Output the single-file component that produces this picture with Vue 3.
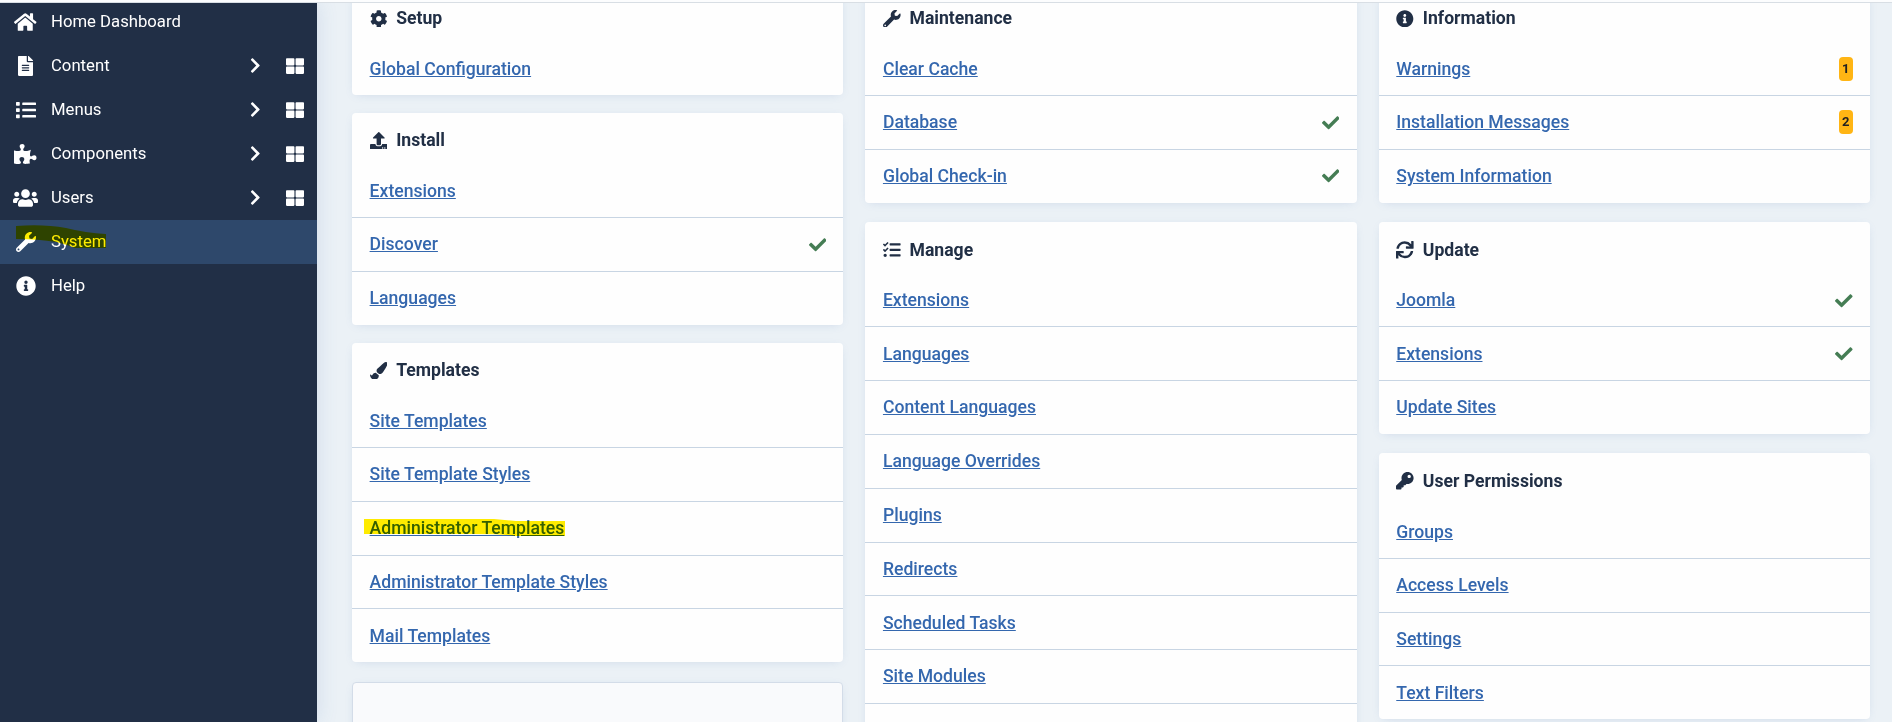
<script setup>
const icons = {
  home: [576, 'M280.37 148.26L96 300.11V464a16 16 0 0 0 16 16l112.06-.29a16 16 0 0 0 15.92-16V368a16 16 0 0 1 16-16h64a16 16 0 0 1 16 16v95.64a16 16 0 0 0 16 16.05L464 480a16 16 0 0 0 16-16V300L295.67 148.26a12.19 12.19 0 0 0-15.3 0zM571.6 251.47L488 182.56V44.05a12 12 0 0 0-12-12h-56a12 12 0 0 0-12 12v72.61L318.47 43a48 48 0 0 0-61 0L4.34 251.47a12 12 0 0 0-1.6 16.9l25.5 31A12 12 0 0 0 45.15 301l235.22-193.74a12.19 12.19 0 0 1 15.3 0L530.9 301a12 12 0 0 0 16.9-1.6l25.5-31a12 12 0 0 0-1.7-16.93z'],
  file: [384, 'M224 136V0H24C10.7 0 0 10.7 0 24v464c0 13.3 10.7 24 24 24h336c13.3 0 24-10.7 24-24V160H248c-13.2 0-24-10.8-24-24zm64 236c0 6.6-5.4 12-12 12H108c-6.6 0-12-5.4-12-12v-8c0-6.6 5.4-12 12-12h168c6.6 0 12 5.4 12 12v8zm0-64c0 6.6-5.4 12-12 12H108c-6.6 0-12-5.4-12-12v-8c0-6.6 5.4-12 12-12h168c6.6 0 12 5.4 12 12v8zm0-72v8c0 6.6-5.4 12-12 12H108c-6.6 0-12-5.4-12-12v-8c0-6.6 5.4-12 12-12h168c6.6 0 12 5.4 12 12zm96-114.1v6.1H256V0h6.1c6.4 0 12.5 2.5 17 7l97.9 98c4.5 4.5 7 10.6 7 16.9z'],
  list: [512, 'M80 368H16a16 16 0 0 0-16 16v64a16 16 0 0 0 16 16h64a16 16 0 0 0 16-16v-64a16 16 0 0 0-16-16zm0-320H16A16 16 0 0 0 0 64v64a16 16 0 0 0 16 16h64a16 16 0 0 0 16-16V64a16 16 0 0 0-16-16zm0 160H16a16 16 0 0 0-16 16v64a16 16 0 0 0 16 16h64a16 16 0 0 0 16-16v-64a16 16 0 0 0-16-16zm416 176H176a16 16 0 0 0-16 16v32a16 16 0 0 0 16 16h320a16 16 0 0 0 16-16v-32a16 16 0 0 0-16-16zm0-320H176a16 16 0 0 0-16 16v32a16 16 0 0 0 16 16h320a16 16 0 0 0 16-16V80a16 16 0 0 0-16-16zm0 160H176a16 16 0 0 0-16 16v32a16 16 0 0 0 16 16h320a16 16 0 0 0 16-16v-32a16 16 0 0 0-16-16z'],
  puzzle: [576, 'M519.442 288.651c-41.519 0-59.5 31.593-82.058 31.593C377.409 320.244 432 144 432 144s-196.288 80-196.288-3.297c0-35.827 36.288-46.25 36.288-85.985C272 19.216 243.885 0 210.539 0c-34.654 0-66.366 18.891-66.366 56.346 0 41.364 31.711 59.277 31.711 81.75C175.885 207.719 0 166.758 0 166.758v333.237s178.635 41.047 178.635-28.662c0-22.473-40-40.107-40-81.471 0-37.456 29.25-56.346 63.577-56.346 33.673 0 61.788 19.216 61.788 54.717 0 39.735-36.288 50.158-36.288 85.985 0 60.803 129.675 25.73 181.23 25.73 0 0-34.725-120.101 25.827-120.101 35.962 0 46.423 36.152 86.308 36.152C556.712 416 576 387.99 576 354.443c0-34.199-18.962-65.792-56.558-65.792z'],
  users: [640, 'M96 224c35.3 0 64-28.7 64-64s-28.7-64-64-64-64 28.7-64 64 28.7 64 64 64zm448 0c35.3 0 64-28.7 64-64s-28.7-64-64-64-64 28.7-64 64 28.7 64 64 64zm32 32h-64c-17.6 0-33.5 7.1-45.1 18.6 40.3 22.1 68.9 62 75.1 109.4h66c17.7 0 32-14.3 32-32v-32c0-35.3-28.7-64-64-64zm-256 0c61.9 0 112-50.1 112-112S381.9 32 320 32 208 82.1 208 144s50.1 112 112 112zm76.8 32h-8.3c-20.8 10-43.9 16-68.5 16s-47.6-6-68.5-16h-8.3C179.6 288 128 339.6 128 403.2V432c0 26.5 21.5 48 48 48h288c26.5 0 48-21.5 48-48v-28.8c0-63.6-51.6-115.2-115.2-115.2zm-223.7-13.4C161.5 263.1 145.6 256 128 256H64c-35.3 0-64 28.7-64 64v32c0 17.7 14.3 32 32 32h65.9c6.3-47.4 34.9-87.3 75.2-109.4z'],
  wrench: [512, 'M507.73 109.1c-2.24-9.03-13.54-12.09-20.12-5.51l-74.36 74.36-67.88-11.31-11.31-67.88 74.36-74.36c6.62-6.62 3.43-17.9-5.66-20.16-47.38-11.74-99.55.91-136.58 37.93-39.64 39.64-50.55 97.1-34.05 147.2L18.74 402.76c-24.99 24.99-24.99 65.51 0 90.5 24.99 24.99 65.51 24.99 90.5 0l213.21-213.21c50.12 16.71 107.47 5.68 147.37-34.22 37.07-37.07 49.7-89.32 37.91-136.73zM64 472c-13.25 0-24-10.75-24-24 0-13.26 10.75-24 24-24s24 10.74 24 24c0 13.25-10.75 24-24 24z'],
  info: [512, 'M256 8C119.043 8 8 119.083 8 256c0 136.997 111.043 248 248 248s248-111.003 248-248C504 119.083 392.957 8 256 8zm0 110c23.196 0 42 18.804 42 42s-18.804 42-42 42-42-18.804-42-42 18.804-42 42-42zm56 254c0 6.627-5.373 12-12 12h-88c-6.627 0-12-5.373-12-12v-24c0-6.627 5.373-12 12-12h12v-64h-12c-6.627 0-12-5.373-12-12v-24c0-6.627 5.373-12 12-12h64c6.627 0 12 5.373 12 12v100h12c6.627 0 12 5.373 12 12v24z'],
  chevron: [320, 'M285.476 272.971L91.132 467.314c-9.373 9.373-24.569 9.373-33.941 0l-22.667-22.667c-9.357-9.357-9.375-24.522-.04-33.901L188.505 256 34.484 101.255c-9.335-9.379-9.317-24.544.04-33.901l22.667-22.667c9.373-9.373 24.569-9.373 33.941 0L285.475 239.03c9.373 9.372 9.373 24.568.001 33.941z'],
  large: [512, 'M296 32h192c13.255 0 24 10.745 24 24v160c0 13.255-10.745 24-24 24H296c-13.255 0-24-10.745-24-24V56c0-13.255 10.745-24 24-24zm-80 0H24C10.745 32 0 42.745 0 56v160c0 13.255 10.745 24 24 24h192c13.255 0 24-10.745 24-24V56c0-13.255-10.745-24-24-24zM0 296v160c0 13.255 10.745 24 24 24h192c13.255 0 24-10.745 24-24V296c0-13.255-10.745-24-24-24H24c-13.255 0-24 10.745-24 24zm296 184h192c13.255 0 24-10.745 24-24V296c0-13.255-10.745-24-24-24H296c-13.255 0-24 10.745-24 24v160c0 13.255 10.745 24 24 24z'],
  cog: [512, 'M487.4 315.7l-42.6-24.6c4.3-23.2 4.3-47 0-70.2l42.6-24.6c4.9-2.8 7.1-8.6 5.5-14-11.1-35.6-30-67.8-54.7-94.6-3.8-4.1-10-5.1-14.8-2.3L380.8 110c-17.9-15.4-38.5-27.3-60.8-35.1V25.8c0-5.6-3.9-10.5-9.4-11.7-36.7-8.2-74.3-7.8-109.2 0-5.5 1.2-9.4 6.1-9.4 11.7V75c-22.2 7.9-42.8 19.8-60.8 35.1L88.7 85.5c-4.9-2.8-11-1.9-14.8 2.3-24.7 26.7-43.6 58.9-54.7 94.6-1.7 5.4.6 11.2 5.5 14L67.3 221c-4.3 23.2-4.3 47 0 70.2l-42.6 24.6c-4.9 2.8-7.1 8.6-5.5 14 11.1 35.6 30 67.8 54.7 94.6 3.8 4.1 10 5.1 14.8 2.3l42.6-24.6c17.9 15.4 38.5 27.3 60.8 35.1v49.2c0 5.6 3.9 10.5 9.4 11.7 36.7 8.2 74.3 7.8 109.2 0 5.5-1.2 9.4-6.1 9.4-11.7v-49.2c22.2-7.9 42.8-19.8 60.8-35.1l42.6 24.6c4.9 2.8 11 1.9 14.8-2.3 24.7-26.7 43.6-58.9 54.7-94.6 1.5-5.5-.7-11.3-5.6-14.1zM256 336c-44.1 0-80-35.9-80-80s35.9-80 80-80 80 35.9 80 80-35.9 80-80 80z'],
  upload: [512, 'M296 384h-80c-13.3 0-24-10.7-24-24V192h-87.7c-17.8 0-26.7-21.5-14.1-34.1L242.3 5.7c7.5-7.5 19.8-7.5 27.3 0l152.2 152.2c12.6 12.6 3.7 34.1-14.1 34.1H320v168c0 13.3-10.7 24-24 24zm216-8v112c0 13.3-10.7 24-24 24H24c-13.3 0-24-10.7-24-24V376c0-13.3 10.7-24 24-24h136v8c0 30.9 25.1 56 56 56h80c30.9 0 56-25.1 56-56v-8h136c13.3 0 24 10.7 24 24zm-124 88c0-11-9-20-20-20s-20 9-20 20 9 20 20 20 20-9 20-20zm64 0c0-11-9-20-20-20s-20 9-20 20 9 20 20 20 20-9 20-20z'],
  brush: [512, 'M167.02 309.34c-40.12 2.58-76.53 17.86-97.19 72.3-2.35 6.21-8 9.98-14.59 9.98-11.11 0-45.46-27.67-55.25-34.35C0 439.62 37.93 512 128 512c75.86 0 128-43.77 128-120.19 0-3.11-.65-6.08-.97-9.13l-88.01-73.34zM457.89 0c-15.16 0-29.37 6.71-40.21 16.45C213.27 199.05 192 203.34 192 257.09c0 13.7 3.25 26.76 8.73 38.7l63.82 53.18c7.21 1.8 14.64 3.03 22.39 3.03 62.11 0 98.11-45.47 211.16-256.46 7.38-14.35 13.9-29.85 13.9-45.99C512 20.64 486 0 457.89 0z'],
  tasks: [512, 'M139.61 35.5a12 12 0 0 0-17 0L58.93 98.81l-22.7-22.12a12 12 0 0 0-17 0L3.53 92.41a12 12 0 0 0 0 17l47.59 47.4a12.78 12.78 0 0 0 17.61 0l15.59-15.62L156.52 69a12.09 12.09 0 0 0 .09-17zm0 159.19a12 12 0 0 0-17 0l-63.68 63.72-22.7-22.1a12 12 0 0 0-17 0L3.53 252a12 12 0 0 0 0 17L51 316.5a12.77 12.77 0 0 0 17.6 0l15.7-15.69 72.2-72.22a12 12 0 0 0 .09-16.9zM64 368c-26.49 0-48.59 21.5-48.59 48S37.53 464 64 464a48 48 0 0 0 0-96zm432 16H208a16 16 0 0 0-16 16v32a16 16 0 0 0 16 16h288a16 16 0 0 0 16-16v-32a16 16 0 0 0-16-16zm0-320H208a16 16 0 0 0-16 16v32a16 16 0 0 0 16 16h288a16 16 0 0 0 16-16V80a16 16 0 0 0-16-16zm0 160H208a16 16 0 0 0-16 16v32a16 16 0 0 0 16 16h288a16 16 0 0 0 16-16v-32a16 16 0 0 0-16-16z'],
  sync: [512, 'M440.65 12.57l4 82.77A247.16 247.16 0 0 0 255.83 8C134.73 8 33.91 94.92 12.29 209.82A12 12 0 0 0 24.09 224h49.05a12 12 0 0 0 11.67-9.26 175.91 175.91 0 0 1 317-56.94l-101.46-4.86a12 12 0 0 0-12.57 12v47.41a12 12 0 0 0 12 12H500a12 12 0 0 0 12-12V12a12 12 0 0 0-12-12h-47.37a12 12 0 0 0-11.98 12.57zM255.83 432a175.61 175.61 0 0 1-146-77.8l101.8 4.87a12 12 0 0 0 12.57-12v-47.4a12 12 0 0 0-12-12H12a12 12 0 0 0-12 12V500a12 12 0 0 0 12 12h47.35a12 12 0 0 0 12-12.6l-4.15-82.57A247.17 247.17 0 0 0 255.83 504c121.11 0 221.93-86.92 243.55-201.82a12 12 0 0 0-11.8-14.18h-49.05a12 12 0 0 0-11.67 9.26A175.86 175.86 0 0 1 255.83 432z'],
  key: [512, 'M512 176.001C512 273.203 433.202 352 336 352c-11.22 0-22.19-1.062-32.827-3.069l-24.012 27.014A23.999 23.999 0 0 1 261.223 384H224v40c0 13.255-10.745 24-24 24h-40v40c0 13.255-10.745 24-24 24H24c-13.255 0-24-10.745-24-24v-78.059c0-6.365 2.529-12.47 7.029-16.971l161.802-161.802C163.108 213.814 160 195.271 160 176 160 78.798 238.797.001 335.999 0 433.488-.001 512 78.511 512 176.001zM336 128c0 26.51 21.49 48 48 48s48-21.49 48-48-21.49-48-48-48-48 21.49-48 48z'],
  check: [512, 'M173.898 439.404l-166.4-166.4c-9.997-9.997-9.997-26.206 0-36.204l36.203-36.204c9.997-9.998 26.207-9.998 36.204 0L192 312.69 432.095 72.596c9.997-9.997 26.207-9.997 36.204 0l36.203 36.204c9.997 9.997 9.997 26.206 0 36.204l-294.4 294.401c-9.998 9.997-26.207 9.997-36.204-.001z'],
}

const menu = [
  { icon: 'home', label: 'Home Dashboard' },
  { icon: 'file', label: 'Content', sub: true },
  { icon: 'list', label: 'Menus', sub: true },
  { icon: 'puzzle', label: 'Components', sub: true },
  { icon: 'users', label: 'Users', sub: true },
  { icon: 'wrench', label: 'System', active: true },
  { icon: 'info', label: 'Help' },
]

const columns = [
  [
    { icon: 'cog', title: 'Setup', rows: [{ label: 'Global Configuration' }] },
    { icon: 'upload', title: 'Install', rows: [{ label: 'Extensions' }, { label: 'Discover', ok: true }, { label: 'Languages' }] },
    {
      icon: 'brush',
      title: 'Templates',
      rows: [
        { label: 'Site Templates' },
        { label: 'Site Template Styles' },
        { label: 'Administrator Templates', marked: true },
        { label: 'Administrator Template Styles' },
        { label: 'Mail Templates' },
      ],
    },
    { blank: true, title: 'blank', rows: [] },
  ],
  [
    { icon: 'wrench', title: 'Maintenance', rows: [{ label: 'Clear Cache' }, { label: 'Database', ok: true }, { label: 'Global Check-in', ok: true }] },
    {
      icon: 'tasks',
      title: 'Manage',
      rows: ['Extensions', 'Languages', 'Content Languages', 'Language Overrides', 'Plugins', 'Redirects', 'Scheduled Tasks', 'Site Modules', ''].map((label) => ({ label })),
    },
  ],
  [
    { icon: 'info', title: 'Information', rows: [{ label: 'Warnings', count: 1 }, { label: 'Installation Messages', count: 2 }, { label: 'System Information' }] },
    { icon: 'sync', title: 'Update', rows: [{ label: 'Joomla', ok: true }, { label: 'Extensions', ok: true }, { label: 'Update Sites' }] },
    { icon: 'key', title: 'User Permissions', rows: [{ label: 'Groups' }, { label: 'Access Levels' }, { label: 'Settings' }, { label: 'Text Filters' }] },
  ],
]

const box = (name) => `0 0 ${icons[name][0]} 512`
</script>

<template>
  <div class="page">
    <div class="topline"></div>
    <div class="body">
      <nav class="sidebar">
        <a v-for="m in menu" :key="m.label" class="item" :class="{ active: m.active }">
          <span class="glyph"><svg :viewBox="box(m.icon)"><path :d="icons[m.icon][1]" /></svg></span>
          <span class="name">{{ m.label }}</span>
          <template v-if="m.sub">
            <svg class="chev" :viewBox="box('chevron')"><path :d="icons.chevron[1]" /></svg>
            <svg class="large" :viewBox="box('large')"><path :d="icons.large[1]" /></svg>
          </template>
          <svg v-if="m.active" class="marker menu-marker" viewBox="0 0 90 24">
            <path d="M0 1 Q28-1 50 3 Q70 8 90 9V23H59Q52 20 40 17Q22 14 0 14Z" />
          </svg>
        </a>
      </nav>
      <main class="columns">
        <div v-for="(col, i) in columns" :key="i" class="column" :class="'column-' + i">
          <section v-for="c in col" :key="c.title" class="card" :class="{ blank: c.blank }">
            <template v-if="!c.blank">
              <h2 class="head">
                <svg :viewBox="box(c.icon)"><path :d="icons[c.icon][1]" /></svg>
                <span>{{ c.title }}</span>
              </h2>
              <ul class="rows">
                <li v-for="r in c.rows" :key="r.label" class="row">
                  <a class="link">{{ r.label }}<svg v-if="r.marked" class="marker link-marker" viewBox="0 0 201 17" preserveAspectRatio="none">
                    <path d="M0 0H130L152 2H201V17H152Q140 15 110 15H0Z" />
                  </svg></a>
                  <svg v-if="r.ok" class="check" :viewBox="box('check')"><path :d="icons.check[1]" /></svg>
                  <span v-if="r.count" class="count">{{ r.count }}</span>
                </li>
              </ul>
            </template>
          </section>
        </div>
      </main>
    </div>
  </div>
</template>

<style>
body {
  overflow: hidden;
}
</style>

<style scoped>
.page {
  height: 722px;
  overflow: hidden;
  display: flex;
  flex-direction: column;
  background: #ebf1f6;
  font-family: Roboto, "Liberation Sans", sans-serif;
  font-size: 17.6px;
  line-height: 26.4px;
  color: #212f45;
}
.topline {
  flex: none;
  height: 2px;
  background: #fcfdfe;
  border-bottom: 1px solid #d8dee4;
}
.body {
  flex: 1;
  min-height: 0;
  display: flex;
  overflow: hidden;
}
svg {
  fill: currentColor;
  display: block;
}
.sidebar {
  flex: none;
  width: 317px;
  background: #212f46;
  color: #fff;
  font-size: 16.72px;
  box-shadow: 0 0 20px rgba(70, 110, 180, 0.16);
}
.item {
  position: relative;
  display: flex;
  align-items: center;
  height: 44px;
  box-sizing: border-box;
  padding: 0 13px;
}
.item:first-child {
  margin-top: -3.4px;
}
.item.active {
  background: #2e486b;
}
.glyph {
  width: 25px;
  margin-right: 13px;
  display: flex;
  justify-content: center;
}
.glyph svg {
  height: 20px;
}
.name {
  flex: 1;
}
.chev {
  height: 17px;
  margin-right: 25px;
}
.large {
  height: 18px;
}
.marker {
  position: absolute;
  fill: #ffec00;
  mix-blend-mode: multiply;
}
.menu-marker {
  left: 16px;
  top: 5px;
  width: 90px;
  height: 24px;
}
.columns {
  flex: 1;
  min-width: 0;
  padding: 0 22px 0 35px;
  display: grid;
  grid-template-columns: repeat(3, 1fr);
  gap: 22px;
  align-items: start;
}
.column {
  display: flex;
  flex-direction: column;
  gap: 19.4px;
  margin-top: -12.4px;
}
.column-0 {
  gap: 17.8px;
}
.card {
  background: #fefefe;
  border-radius: 4px;
  box-shadow: 0 2px 10px -4px rgba(60, 100, 170, 0.22);
}
.blank {
  height: 90px;
  margin-top: 2px;
  box-sizing: border-box;
  background: #f9fafc;
  border: 1px solid #d3dce8;
}
.head {
  margin: 0;
  height: 51.6px;
  padding: 4px 17.6px 0;
  box-sizing: border-box;
  display: flex;
  align-items: center;
  gap: 9px;
  font-size: 17.6px;
  font-weight: 700;
}
.head svg {
  height: 17.6px;
}
.rows {
  margin: 0;
  padding: 0;
  list-style: none;
}
.row {
  height: 53.8px;
  box-sizing: border-box;
  padding: 0 17.2px 0 17.6px;
  display: flex;
  align-items: center;
  justify-content: space-between;
  border-bottom: 1px solid #c8d5e3;
}
.row:first-child {
  padding-top: 1px;
}
.row:last-child {
  height: 52.8px;
  border-bottom: 0;
}
.link {
  position: relative;
  color: #3467ae;
  font-weight: 500;
  text-decoration: underline;
}
.link-marker {
  left: -6px;
  top: 4px;
  width: 201px;
  height: 17px;
}
.check {
  height: 17.6px;
  color: #457d54;
}
.count {
  background: #ffb514;
  color: #212121;
  border-radius: 4px;
  width: 14px;
  height: 24px;
  line-height: 24px;
  font-size: 13px;
  font-weight: 700;
  text-align: center;
  margin-top: -1px;
}
</style>
